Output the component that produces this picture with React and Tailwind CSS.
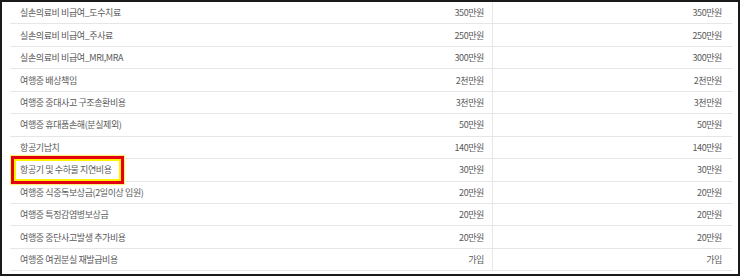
import React from "react";

const rows = [
  ["실손의료비 비급여_도수치료", "350만원", "350만원"],
  ["실손의료비 비급여_주사료", "250만원", "250만원"],
  ["실손의료비 비급여_MRI,MRA", "300만원", "300만원"],
  ["여행중 배상책임", "2천만원", "2천만원"],
  ["여행중 중대사고 구조송환비용", "3천만원", "3천만원"],
  ["여행중 휴대품손해(분실제외)", "50만원", "50만원"],
  ["항공기납치", "140만원", "140만원"],
  ["항공기 및 수하물 지연비용", "30만원", "30만원"],
  ["여행중 식중독보상금(2일이상 입원)", "20만원", "20만원"],
  ["여행중 특정감염병보상금", "20만원", "20만원"],
  ["여행중 중단사고발생 추가비용", "20만원", "20만원"],
  ["여행중 여권분실 재발급비용", "가입", "가입"],
];

export default function App() {
  return (
    <div
      className="w-[740px] h-[276px] bg-white border-2 border-[#1a1a1a] overflow-hidden pl-[8px] pr-[6px]"
      style={{ fontFamily: '"Noto Sans CJK KR", "Noto Sans", sans-serif' }}
    >
      <div className="flex flex-col">
        {rows.map((r, i) => (
          <div
            key={i}
            className="flex h-[22.45px] border-b border-[#e6e6e6] text-[9px] tracking-[-0.4px] text-[#5a5a5a] leading-none"
          >
            <div className="flex-1 flex items-center pl-[10px] relative">
              <span>{r[0]}</span>
              {i === 7 && (
                <span className="absolute left-[1px] top-[-3px] w-[113px] h-[28px] border-[3px] border-[#e3000f] shadow-[0_0_1px_1px_#fff27a] pointer-events-none">
                  <span className="block w-full h-full border-2 border-[#fff200]" />
                </span>
              )}
            </div>
            <div className="w-[240px] flex items-center justify-end pr-[8px]">
              {r[1]}
            </div>
            <div className="w-[240px] flex items-center justify-end pr-[10px] border-l border-[#e6e6e6]">
              {r[2]}
            </div>
          </div>
        ))}
      </div>
    </div>
  );
}
